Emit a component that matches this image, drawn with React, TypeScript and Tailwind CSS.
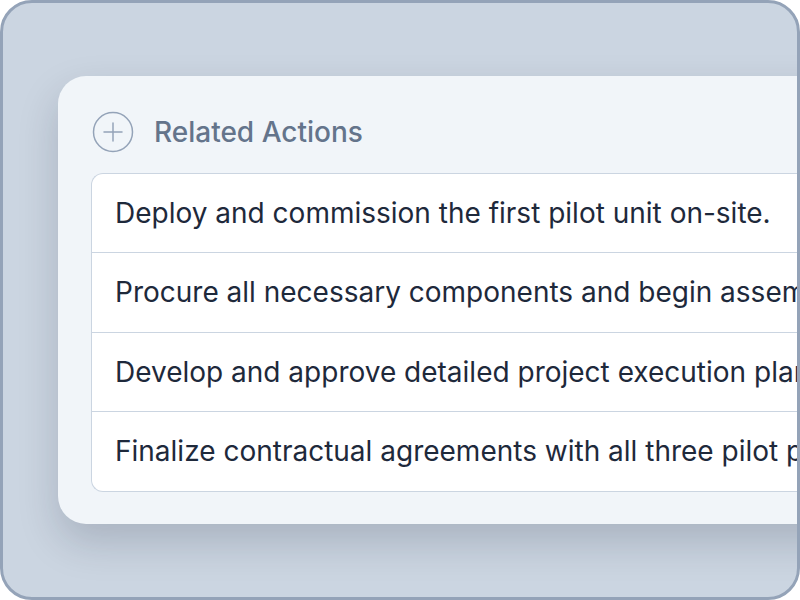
import React from "react";

const items = [
  "Deploy and commission the first pilot unit on-site.",
  "Procure all necessary components and begin assembly of the pilot units.",
  "Develop and approve detailed project execution plans for each site.",
  "Finalize contractual agreements with all three pilot partners.",
];

export default function App() {
  return (
    <div
      className="w-[800px] h-[600px] overflow-hidden rounded-[32px] border-[3px] border-[#94a3b8] bg-[#cbd5e1]"
      style={{ fontFamily: "Inter, 'Noto Sans', sans-serif" }}
    >
      <div className="ml-[55px] mt-[73px] w-[820px] rounded-[28px] bg-[#f1f5f9] pl-[33px] pt-[34px] pb-[32px] shadow-[0_18px_40px_rgba(15,23,42,0.18)]">
        <div className="flex h-[44px] items-center gap-[19px]">
          <svg width="44" height="44" viewBox="0 0 44 44" fill="none">
            <circle cx="22" cy="22" r="19.5" stroke="#94a3b8" strokeWidth="1.5" />
            <path d="M13 22h18M22 13v18" stroke="#94a3b8" strokeWidth="1.5" strokeLinecap="round" />
          </svg>
          <span className="text-[28px] font-medium leading-[36px] text-[#64748b]">Related Actions</span>
        </div>
        <div className="mt-[19px] overflow-hidden rounded-l-[12px] border-[1.5px] border-r-0 border-[#cbd5e1] bg-white">
          {items.map((t, i) => (
            <div
              key={i}
              className={`flex items-center whitespace-nowrap pl-[23px] text-[28px] leading-[36px] text-[#1e293b] ${
                i > 0 ? "h-[79.5px] border-t-[1.5px] border-[#cbd5e1]" : "h-[78px]"
              }`}
            >
              {t}
            </div>
          ))}
        </div>
      </div>
    </div>
  );
}
